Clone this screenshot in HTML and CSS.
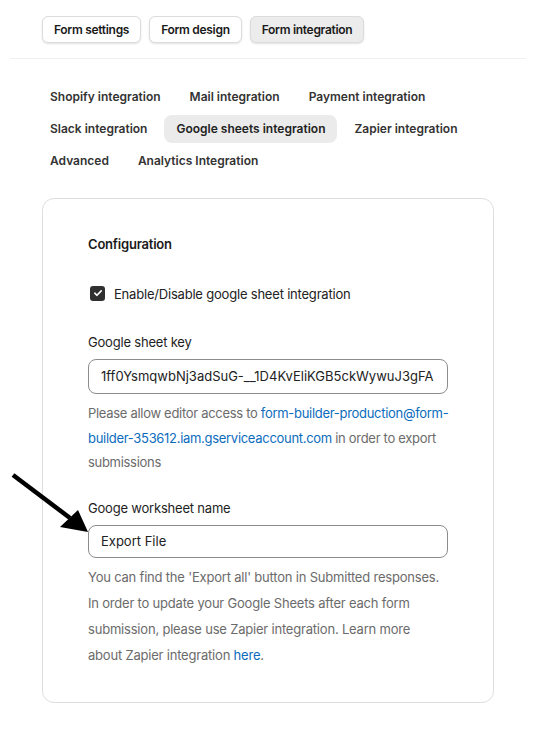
FILE: index.html
```html
<!DOCTYPE html>
<html lang="en">
<head>
<meta charset="utf-8">
<title>Form integration</title>
<link rel="stylesheet" href="styles.css">
</head>
<body>
<div class="page">
  <div class="topbar">
    <button class="top-btn">Form settings</button>
    <button class="top-btn">Form design</button>
    <button class="top-btn active">Form integration</button>
  </div>
  <div class="divider"></div>
  <div class="tabs">
    <div class="tab-row">
      <span class="tab">Shopify integration</span>
      <span class="tab">Mail integration</span>
      <span class="tab">Payment integration</span>
    </div>
    <div class="tab-row">
      <span class="tab">Slack integration</span>
      <span class="tab active">Google sheets integration</span>
      <span class="tab">Zapier integration</span>
    </div>
    <div class="tab-row">
      <span class="tab">Advanced</span>
      <span class="tab">Analytics Integration</span>
    </div>
  </div>
  <div class="card">
    <h2 class="card-title">Configuration</h2>
    <label class="check-row">
      <span class="checkbox">
        <svg width="14" height="14" viewBox="0 0 14 14"><path d="M3.8 7.2 L6 9.3 L10.2 4.9" fill="none" stroke="#fff" stroke-width="1.6" stroke-linecap="round" stroke-linejoin="round"/></svg>
      </span>
      <span class="check-label">Enable/Disable google sheet integration</span>
    </label>
    <div class="field-label first">Google sheet key</div>
    <div class="input">1ff0YsmqwbNj3adSuG-__1D4KvEliKGB5ckWywuJ3gFA</div>
    <p class="help key-help"><span class="nowrap">Please allow editor access to <a class="link">form-builder-production@form-</a></span><br><a class="link">builder-353612.iam.gserviceaccount.com</a> in order to export submissions</p>
    <div class="field-label second">Googe worksheet name</div>
    <div class="input short">Export File</div>
    <p class="help tall">You can find the 'Export all' button in Submitted responses. In order to update your Google Sheets after each form submission, please use Zapier integration. Learn more about Zapier integration <a class="link">here</a>.</p>
  </div>
  <svg class="arrow" width="100" height="70" viewBox="0 0 100 70">
    <line x1="13" y1="10" x2="70" y2="53" stroke="#000" stroke-width="4.5"/>
    <polygon points="88,67 60,62 78,45" fill="#000"/>
  </svg>
</div>
</body>
</html>
```
FILE: styles.css
```css
* { box-sizing: border-box; }
html, body { margin: 0; padding: 0; background: #fff; }
body {
  font-family: Inter, "Noto Sans", "Liberation Sans", sans-serif;
  color: #1f1f1f;
  width: 536px;
  height: 736px;
  overflow: hidden;
}
.page { position: relative; }
.topbar {
  display: flex;
  gap: 8px;
  padding: 16px 0 0 42px;
}
.top-btn {
  font-family: inherit;
  font-size: 12px;
  font-weight: 600;
  color: #1a1a1a;
  height: 27px;
  padding: 0 11px;
  background: #fff;
  border: 1px solid #dcdcdc;
  border-radius: 6px;
  box-shadow: 0 1px 2px rgba(0,0,0,0.12);
  letter-spacing: -0.3px;
}
.top-btn.active { background: #ececec; }
.divider {
  height: 1px;
  background: #efefef;
  margin: 15px 10px 0 10px;
}
.tabs {
  display: flex;
  flex-direction: column;
  gap: 4px;
  padding: 24px 0 0 38px;
}
.tab-row { display: flex; gap: 5px; }
.tab {
  height: 28px;
  line-height: 28px;
  padding: 0 12px;
  font-size: 12px;
  font-weight: 600;
  color: #333;
  border-radius: 8px;
  letter-spacing: 0;
}
.tab.active { background: #ebebeb; color: #222; }
.card {
  margin: 23px 0 0 42px;
  width: 452px;
  height: 505px;
  border: 1px solid #dedede;
  border-radius: 12px;
  padding: 35px 45px 0 45px;
}
.card-title {
  margin: 0;
  font-size: 13px;
  font-weight: 600;
  line-height: 20px;
  color: #1a1a1a;
  letter-spacing: -0.2px;
}
.check-row {
  display: flex;
  align-items: center;
  gap: 9px;
  margin-top: 29px;
  height: 20px;
}
.checkbox {
  width: 15px;
  height: 15px;
  margin-left: 2px;
  border-radius: 3px;
  background: #303030;
  display: flex;
  align-items: center;
  justify-content: center;
}
.check-label { font-size: 13px; color: #222; line-height: 20px; padding-top: 2px; letter-spacing: -0.2px; }
.field-label {
  font-size: 13px;
  line-height: 20px;
  color: #1e1e1e;
  letter-spacing: -0.2px;
}
.field-label.first { margin-top: 29px; }
.field-label.second { margin-top: 23px; }
.input {
  margin-top: 7px;
  height: 35px;
  line-height: 33px;
  border: 1px solid #8c8c8c;
  border-radius: 8px;
  padding: 0 12px;
  font-size: 13px;
  color: #222;
  white-space: nowrap;
  overflow: hidden;
  letter-spacing: 0;
}
.input.short { height: 33px; line-height: 31px; }
.help {
  margin: 7px 0 0 0;
  font-size: 13px;
  line-height: 24.5px;
  color: #6b6b6b;
  letter-spacing: -0.2px;
}
.help.key-help { letter-spacing: -0.3px; }
.nowrap { white-space: nowrap; }
.help.tall { line-height: 26px; margin-top: 6px; max-width: 356px; }
.link { color: #0b6cbd; text-decoration: none; }
.arrow {
  position: absolute;
  left: 0;
  top: 465px;
}
```
